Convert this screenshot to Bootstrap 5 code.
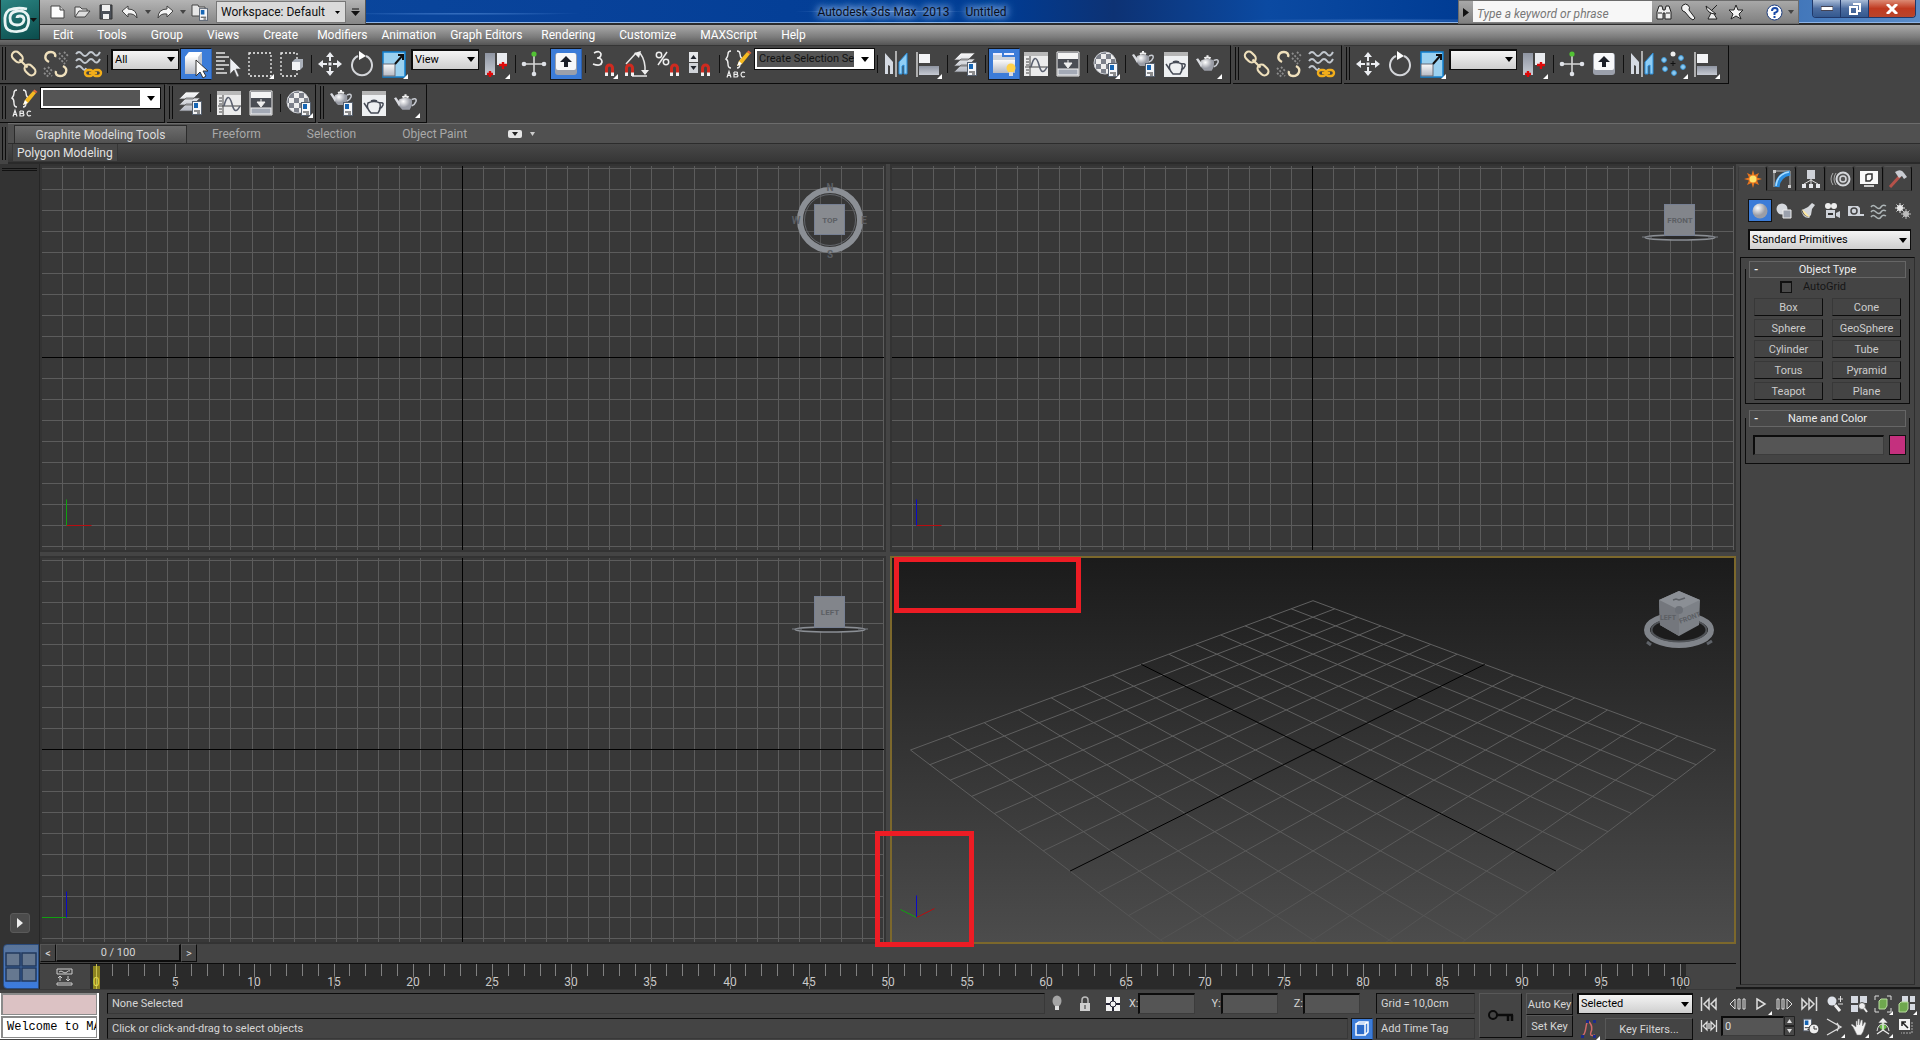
<!DOCTYPE html>
<html lang="en">
<head>
<meta charset="utf-8">
<meta name="viewport" content="width=device-width, initial-scale=1">
<title>Autodesk 3ds Max 2013 - Untitled</title>
<link href="https://cdn.jsdelivr.net/npm/bootstrap@5.3.0/dist/css/bootstrap.min.css" rel="stylesheet">
<style>
:root{--ui:#444;--line:#0c0c0c;--txt:#d6d6d6;--arrow:url("data:image/svg+xml,%3Csvg xmlns='http://www.w3.org/2000/svg' width='8' height='5'%3E%3Cpath d='M0 0h8L4 5z' fill='%23000'/%3E%3C/svg%3E")}
body{height:100vh;min-height:700px;background:var(--ui);color:var(--txt);font:12px/16px Roboto,"Noto Sans",sans-serif;overflow:hidden}
button,input,select{font:inherit;color:inherit;border-radius:0}
button{background:none;border:0;padding:0}
svg{display:block;flex:none}
/* title bar */
.titlebar{height:25px;background:radial-gradient(ellipse at 24% 60%,#3f78c8 0,#3f78c800 6%),radial-gradient(ellipse at 46% 50%,#5f8fd4 0,#5f8fd400 6%),radial-gradient(ellipse at 72% 90%,#2f68ba 0,#2f68ba00 8%),linear-gradient(90deg,#0c4a9e 0,#08429a 30%,#003c94 52%,#0d3274 58%,#0b4aa2 66%,#003c94 76%,#5a8cc8 100%);border-bottom:2px solid #2b2b2b;box-shadow:inset 0 -1px #8fb4e6;position:relative}
.appbtn{width:40px;height:40px;position:absolute;left:0;top:0;z-index:3;background:linear-gradient(160deg,#2b8482,#0b4c4c);border:1px solid #1c2b2b;border-top:0}
.quick{margin-left:40px;padding-left:6px;height:24px;background:linear-gradient(#b4b4b4,#868686);border-right:1px solid #555}
.quick button{width:24px;height:24px;display:grid;place-items:center}
.quick .slim{width:11px}
.wsbox{width:130px;height:22px;border:1px solid #777;color:#111;padding:0 4px;appearance:none;background:#dadada var(--arrow) no-repeat right 5px center/5px 3px}
.glow{color:#0a0f1c;text-shadow:0 0 8px #9fc0ee,0 0 12px #9fc0ee,0 0 6px #9fc0ee}
.infoc{height:24px;background:linear-gradient(#a8a8a8,#808080);border:1px solid #6c6c6c}
.infoc input{width:179px;height:21px;background:#f7f7f7;border:0;font-style:italic;padding:4px 4px 0;color:#111}
.infoc input::placeholder{color:#777;opacity:1}
.infoc button{width:24px;height:22px;display:grid;place-items:center}
.winc{height:18px;margin-right:4px;margin-left:13px;border:1px solid #20386a;border-top:0;border-radius:0 0 4px 4px;overflow:hidden}
.winc button{width:28px;background:linear-gradient(#a9bcd8,#4d6da0 50%,#33588f);border-right:1px solid #20386a;display:grid;place-items:center}
.winc .shut{width:46px;background:linear-gradient(#dc8a74,#c03a20 50%,#b8452c);border:0}
/* menus */
.menubar{height:20px;padding-left:48px;gap:14px;background:linear-gradient(#ababab,#7c7c7c 60%,#555)}
.menubar a{color:#fff;text-decoration:none;line-height:20px}
.menubar .pd{padding:0 5px}
/* toolbars */
.trow{gap:2px}
.tgroup{height:39px;padding:0 6px 2px 0;border-right:1px solid var(--line);border-bottom:1px solid var(--line);border-top:1px solid #353535}
.grip{width:8px;height:33px;position:relative}
.grip::after{content:"";position:absolute;left:2px;top:0;width:4px;height:100%;border:solid var(--line);border-width:0 1px}
.tb{width:32px;height:32px;position:relative;display:grid;place-items:center}
.tb.on{background:#3c7cd8;border:1px solid #16181c;border-right-color:#2b5fae}
.fly::after{content:"";position:absolute;right:2px;bottom:1px;border:solid transparent;border-width:0 0 5px 5px;border-bottom-color:#fff}
.vsep{width:6px;height:18px;position:relative}
.vsep::after{content:"";position:absolute;left:3px;top:0;width:1px;height:100%;background:#111}
.lst{appearance:none;height:21px;border:2px solid var(--line);border-width:2px 1px 1px 2px;background:var(--arrow) no-repeat right 3px center,linear-gradient(#f4f4f4,#cfcfcf);color:#000;padding:0 16px 0 2px;font-size:11px;line-height:16px}
.w70{width:68px;margin:0 1px 9px}
.cmb{appearance:none;width:119px;height:20px;margin:0 0 9px 1px;border:1px solid #fff;outline:1px solid var(--line);border-width:2px;background:var(--arrow) no-repeat right 3px center,linear-gradient(90deg,#555 97px,#fff 97px);color:#111;padding:0 18px 0 2px;font-size:11px;line-height:14px}
/* ribbon */
.rtabs{height:21px;background:#505050;border-top:1px solid #6c6c6c;border-bottom:1px solid #2c2c2c}
.rtabs button{color:#a9a9a9;height:19px;padding:0 21px}
.rtabs .cur{background:linear-gradient(#6c6c6c,#525252);color:#ddd;border:1px solid #2b2b2b;border-bottom:0;height:18px;width:173px;padding:0;margin-left:2px;align-self:end;line-height:16px;white-space:nowrap}
.rpanel{height:20px;background:linear-gradient(#484848,#363636);border-bottom:2px solid #2a2a2a}
.rpanel span{border:1px solid #363636;border-top:0;padding:0 4px;background:#474747;color:#e2e2e2;line-height:18px}
/* viewport area */
.strip{width:40px;background:#333;box-shadow:inset -1px 0 #262626}
.strip .bar{height:3px;border:solid #111;border-width:1px 0;margin:4px 3px 0 2px}
.playb{width:20px;height:20px;background:#4b4b4b;border:1px solid #5a5a5a;border-radius:3px;display:grid;place-items:center;margin:0 auto 11px}
.layb{width:36px;height:45px;background:linear-gradient(#5b7496,#3b7ce0);border:1px solid #2a4b7c;border-radius:4px 0 0 4px;margin-left:3px;display:grid;place-items:center}
.views{display:grid;grid-template:1fr 1fr/1fr 1fr;gap:4px;min-height:0}
.vp{position:relative;border:2px solid #333;background:#383838;min-width:0;min-height:0}
.vp>svg.cv{width:100%;height:100%;position:absolute;inset:0;overflow:hidden}
.vp.act{border-color:#7c682c;background:linear-gradient(#1b1b1b,#4c4c4c)}
.cube{position:absolute;right:14px;top:14px}
.cube text{font:bold 8px Roboto,sans-serif;fill:#5c5f64;text-anchor:middle}
.cube .dir{font-size:10px}
.cube .face{font-size:7px}
.note{position:absolute;border:5px solid #ed1c24;pointer-events:none;z-index:2}
.n1{left:2px;top:-1px;width:187px;height:56px}
.n2{left:-17px;bottom:-5px;width:99px;height:116px}
.slider{height:19px}
.slider button{height:18px;width:16px;border:1px solid var(--line);border-left-color:#555;border-top-color:#555;line-height:15px;font-size:11px}
.slider .thumb{width:125px;border-width:1px 2px 2px 1px}
.track{height:26px;border-top:1px solid var(--line)}
.track .mini{width:50px;display:grid;place-items:center}
.track .ruler{background:#2a2a2a;margin-right:50px;flex-shrink:1;min-width:0;overflow:visible}
.track text{font:12px Roboto,sans-serif;fill:#c9c9c9;text-anchor:middle}
.track .halo{paint-order:stroke;stroke:#2a2a2a;stroke-width:2px}
.track .now{fill:#e0d84a}
/* command panel */
.cpanel{width:184px;font-size:11px;border-bottom:2px solid #191919}
.ctabs{margin:2px 8px 0 2px}
.ctabs button{width:29px;height:25px;border:1px solid #555;border-bottom-color:#383838;border-right:1px solid var(--line);border-left-color:#3a3a3a;border-radius:3px 3px 0 0;display:grid;place-items:center}
.ctabs .cur{border-bottom-color:transparent}
.cats{margin:8px 5px 7px 12px}
.cats button{width:24px;height:23px;display:grid;place-items:center}
.cats .cur{background:#3c7cd8;border:1px solid #111}
.prim{margin:0 9px 7px 12px}
.rolls{margin:0 5px 2px 4px;border:1px solid var(--line);border-right-color:#2e2e2e;border-bottom-color:#2e2e2e;padding:11px 4px 0}
.roll{border:1px solid var(--line);border-top:0;margin-bottom:14px;padding:0 3px}
.rh{height:17px;border:1px solid #666;background:#484848;color:#eee;width:100%;position:relative;top:-8px;line-height:15px;display:block}
.rh i{position:absolute;left:4px;font-style:normal;font-weight:700}
.grid2{display:grid;grid-template-columns:69px 69px;gap:3px 9px;justify-content:center;padding-bottom:3px}
.grid2 button{height:18px;border:1px solid #383838;border-right-color:var(--line);border-bottom-color:var(--line);line-height:15px;color:#ccc}
.agrid{gap:11px;margin:-6px 0 4px 31px;color:#161616;height:14px}
.agrid input{appearance:none;width:12px;height:12px;border:1px solid #111;border-width:2px 1px 1px 2px;background:#4a4a4a;margin:0}
.sunk{background:#555;border:1px solid #3c3c3c;border-top:2px solid var(--line);border-left:2px solid var(--line);padding:0 2px;color:#ddd}
.namef{width:131px;height:20px}
.swatch{width:17px;height:20px;background:#c4307e;border:1px solid #111}
/* status */
.status{height:51px;padding-top:3px;font-size:11px;border-top:1px solid #383838}
.mxs{width:99px;height:46px;background:#fff}
.mxs div{height:22px;border:1px solid #8a8a8a;border-width:2px 1px 1px 2px;margin:0 2px 1px 1px;overflow:hidden;white-space:nowrap;color:#000;font:12px/18px "Liberation Mono",monospace;padding-left:4px}
.mxs .rec{background:#dcc2c4}
.cell{height:21px;border:1px solid #383838;border-top-color:var(--line);border-left-color:var(--line);padding:0 4px;line-height:19px;white-space:nowrap}
.w99{width:99px}
.raised{border:1px solid #585858;border-right-color:var(--line);border-bottom-color:var(--line);height:22px;white-space:nowrap;line-height:19px}
.rw{height:21px}
.rw+.rw{margin-top:4px}
.xyz{width:57px;height:21px}
.degr{width:22px;height:22px;margin:0 3px}
.keyb{width:43px;height:45px;display:grid;place-items:center}
.pb{width:24px;height:22px;display:grid;place-items:center;position:relative}
.pb.fly::after{right:1px;bottom:0;border-width:0 0 4px 4px}
.navg{display:grid;grid-template:22px 22px/repeat(4,23px);gap:1px;padding-right:2px}
.navg .pb{width:23px}
.frame{width:63px;height:20px}
</style>
<script src="https://cdn.jsdelivr.net/npm/bootstrap@5.3.0/dist/js/bootstrap.bundle.min.js"></script>
</head>
<body class="d-flex flex-column">
<svg width="0" height="0" class="position-absolute" aria-hidden="true">
<defs>
<linearGradient id="gm" x1="0" y1="0" x2="0" y2="1"><stop offset="0" stop-color="#fbfbfb"/><stop offset="1" stop-color="#b4b8c2"/></linearGradient>
<linearGradient id="gd" x1="0" y1="0" x2="0" y2="1"><stop offset="0" stop-color="#8f95a2"/><stop offset="1" stop-color="#c6cad2"/></linearGradient>
<radialGradient id="gs" cx=".35" cy=".3"><stop offset="0" stop-color="#fff"/><stop offset="1" stop-color="#9a9da6"/></radialGradient>
<pattern id="chk" width="10" height="10" patternUnits="userSpaceOnUse"><rect width="10" height="10" fill="#eee"/><path d="M0 0h5v5H0zM5 5h5v5H5z" fill="#7c808a"/></pattern>
<symbol id="i-link" viewBox="0 0 30 30"><g fill="none" stroke="#efe0bc" stroke-width="2.2"><rect x="2.500" y="4.500" width="12" height="8" rx="4" transform="rotate(45 9 8)"/><rect x="15" y="17" width="12" height="8" rx="4" transform="rotate(45 21 21)"/><path d="M10.500 10.500l8 8"/></g></symbol>
<symbol id="i-unlink" viewBox="0 0 30 30"><g fill="none" stroke="#efe0bc" stroke-width="2.400"><path d="M8 13C2 10 4 3 10 3c3 0 5 2 4 5"/><path d="M22 17c6 3 3 10-3 10-3 0-5-2-4-5"/></g><g fill="none" stroke="#8d8d8d" stroke-width="1.800" stroke-dasharray="2 1.500"><path d="M18 4l8 8M18 9l6 6M23 3l4 4M3 19l8 8M3 24l5 4M7 18l5 5"/></g></symbol>
<symbol id="i-bind" viewBox="0 0 30 30"><path d="M3 5q3-4 6 0t6 0 6 0 6-2M3 12q3-4 6 0t6 0 6 0 6-2M3 19q3-4 6 0t4 0" fill="none" stroke="#c2c8cf" stroke-width="2"/><g fill="none" stroke="#f3ae1a" stroke-width="2.400"><rect x="12" y="21" width="8" height="6" rx="3"/><rect x="20" y="21" width="8" height="6" rx="3"/><path d="M16 24h8"/></g></symbol>
<symbol id="i-sel" viewBox="0 0 30 30"><path d="M4 8l4-5h13v17l-4 5H4z" fill="#c3c6cc"/><path d="M4 8h13v17H4z" fill="url(#gm)"/><path d="M4 8l4-5h13l-4 5z" fill="#fff"/><path d="M15 11v16l4-4 3 6 3-2-3-5h5z" fill="#fff" stroke="#333"/></symbol>
<symbol id="i-byname" viewBox="0 0 30 30"><path d="M3 4h9M3 8h13M3 12h9M3 16h13M3 20h8M3 24h11" stroke="#e5e5e5" stroke-width="1.600"/><path d="M17 9v16l4-4 3 7 2-1-3-7h5z" fill="#eef0f4" stroke="#555" stroke-width=".6"/></symbol>
<symbol id="i-rect" viewBox="0 0 30 30"><path d="M4 4h22v23H4z" fill="none" stroke="#f2f2f2" stroke-width="1.300" stroke-dasharray="2 2"/></symbol>
<symbol id="i-win" viewBox="0 0 30 30"><path d="M4 4h16v23H4z" fill="none" stroke="#f2f2f2" stroke-width="1.300" stroke-dasharray="2 2"/><path d="M15 13l3-3h8v8l-3 3h-8z" fill="#aab0ba"/><path d="M15 13h8v8h-8z" fill="#f2f3f5"/></symbol>
<symbol id="i-move" viewBox="0 0 30 30"><path d="M15 3l4 5h-3v4h-2V8h-3zM15 27l4-5h-3v-4h-2v4h-3zM3 15l5-4v3h4v2H8v3zM27 15l-5-4v3h-4v2h4v3z" fill="#eceef2"/><rect x="13.500" y="13.500" width="3" height="3" fill="#eceef2"/></symbol>
<symbol id="i-rot" viewBox="0 0 30 30"><path d="M11 7a10 10 0 1 0 8 0" fill="none" stroke="#d4d6da" stroke-width="2"/><path d="M12 2l7 5-7 4z" fill="#fff"/></symbol>
<symbol id="i-scale" viewBox="0 0 30 30"><rect x="4" y="3" width="22" height="25" fill="#9bd1f0" stroke="#1180d0" stroke-width="1.500"/><rect x="4" y="15" width="12" height="12" fill="url(#gm)" stroke="#666a76"/><path d="M16 15l7-8M19 6h5v5" stroke="#111" stroke-width="2" fill="none"/></symbol>
<symbol id="i-pivot" viewBox="0 0 30 30"><rect x="4" y="4" width="10" height="22" fill="url(#gd)"/><path d="M16 4h10v12H16z" fill="#e9ebef"/><path d="M9 22v6M6 25h6M22 13v7M18 16h8" stroke="#e00909" stroke-width="2.400"/></symbol>
<symbol id="i-manip" viewBox="0 0 30 30"><path d="M15 5v20M5 15h20" stroke="#d6d6d6" stroke-width="1.600"/><circle cx="15" cy="5" r="2.600" fill="#52c234"/><circle cx="15" cy="25" r="2.300" fill="#dfe2e8"/><circle cx="5" cy="15" r="2.300" fill="#dfe2e8"/><circle cx="25" cy="15" r="2.300" fill="#dfe2e8"/></symbol>
<symbol id="i-kbd" viewBox="0 0 30 30"><rect x="4" y="4" width="22" height="22" rx="3" fill="#9ba0ab"/><rect x="5" y="4" width="20" height="17" rx="2" fill="#f7f8fa"/><path d="M15 7l6 6h-4v5h-4v-5H9z" fill="#1b1f28"/></symbol>
<symbol id="mag" viewBox="0 0 10 13"><path d="M2 12V5a3 3 0 0 1 6 0v7" fill="none" stroke="#cf2b20" stroke-width="3"/><path d="M.5 9.500h3V13h-3zM6.500 9.500h3V13h-3z" fill="#f2f2f2"/></symbol>
<symbol id="i-s3" viewBox="0 0 30 30"><path d="M5 4q6-3 7 1 0 4-4 4 5 0 5 4-1 5-9 2" fill="none" stroke="#eee" stroke-width="1.700"/><use href="#mag" x="15" y="14" width="11" height="13"/></symbol>
<symbol id="i-ang" viewBox="0 0 30 30"><path d="M5 15L15 4M19 4q6 8 5 20M11 27h15" fill="none" stroke="#e6e6e6" stroke-width="1.500"/><path d="M13 4l7-2-2 7zM20 21h8l-4 5z" fill="#eee"/><use href="#mag" x="3" y="14" width="11" height="13"/></symbol>
<symbol id="i-pct" viewBox="0 0 30 30"><g fill="none" stroke="#eee" stroke-width="1.500"><circle cx="6" cy="6" r="2.700"/><circle cx="13" cy="13" r="2.700"/><path d="M14 3L5 16"/></g><use href="#mag" x="16" y="14" width="11" height="13"/></symbol>
<symbol id="i-spin" viewBox="0 0 30 30"><rect x="4" y="3" width="9" height="10" fill="#e5e7ea"/><rect x="4" y="14" width="9" height="10" fill="#d0d3d8"/><path d="M5.500 10h6l-3-4zM5.500 17h6l-3 4z" fill="#20242c"/><use href="#mag" x="15" y="14" width="11" height="13"/></symbol>
<symbol id="i-abc" viewBox="0 0 30 30"><path d="M8 2Q5 2 5 5t-2 5q2 1 2 5t3 4M14 2q3 0 3 3t2 5q-2 1-2 5t-3 4" fill="none" stroke="#eee" stroke-width="1.400"/><path d="M14 17l2-5L24 3l3 2-8 10z" fill="#f5b921"/><path d="M24 3l1.500-1.500L28.500 4 27 5z" fill="#e86b3a"/><path d="M14 17l2-5 3 3z" fill="#fff"/><path d="M4 28.500l2-6 2 6M5 26.500h3M11 23v5h2q2 0 2-1.300t-2-1.300h-2M11 25.400h2q1.500 0 1.500-1.200T13 23h-2M22 23.500q-3.500-1.500-4 2 .5 3.500 4 2" stroke="#eee" stroke-width="1.200" fill="none"/></symbol>
<symbol id="i-mir" viewBox="0 0 30 30"><path d="M15 2v26" stroke="#ddd" stroke-width="1.400"/><path d="M4 4l8 9v12H9V17l-2-1v9H4z" fill="#d5dae2"/><path d="M26 4l-8 9v12h3V17l2-1v9h3z" fill="#8ecdf5" stroke="#2b8dd8"/></symbol>
<symbol id="i-align" viewBox="0 0 30 30"><path d="M4 3v25" stroke="#ddd" stroke-width="1.400"/><rect x="6" y="5" width="11" height="9" fill="#f3f4f6"/><rect x="6" y="17" width="20" height="9" fill="url(#gd)"/></symbol>
<symbol id="doc" viewBox="0 0 10 14"><rect x=".5" y=".5" width="9" height="13" fill="#f5f6f8" stroke="#56606e"/><rect x="2" y="2" width="4" height="5" fill="#1665b4"/><path d="M2 10h6M5 12h3" stroke="#222"/></symbol>
<symbol id="i-lay" viewBox="0 0 30 30"><path d="M10 4h14l-7 7H3zM10 10h14l-7 7H3zM10 16h14l-7 7H3z" fill="url(#gm)" stroke="#555" stroke-width=".7"/><use href="#doc" x="16" y="13" width="10" height="14"/></symbol>
<symbol id="i-rib" viewBox="0 0 30 30"><path d="M4 5h9v3h13v16H4z" fill="#cfd4dc"/><path d="M4 11h22v13H4z" fill="url(#gm)"/><path d="M4 5h9M15 5h10" stroke="#eef" stroke-width="2"/><circle cx="22" cy="19" r="4.500" fill="#ffd24a"/><rect x="20" y="23" width="4" height="4" fill="#d9dbe0"/></symbol>
<symbol id="i-curve" viewBox="0 0 30 30"><rect x="3" y="3" width="24" height="24" fill="#ececec"/><path d="M3 5h24" stroke="#b9b9b9" stroke-width="4"/><path d="M9 7v20M4 18h23M5 10h3M5 13h3M5 16h3M5 21h3M5 24h3" stroke="#444"/><path d="M10 18q4-16 8-2 3 12 8 2" fill="none" stroke="#5b6170" stroke-width="1.600"/></symbol>
<symbol id="i-schem" viewBox="0 0 30 30"><path d="M4 3h22v24H4z" fill="#4a4d54" stroke="#e9e9e9"/><rect x="5" y="4" width="20" height="6" fill="#f4f4f4"/><rect x="5" y="20" width="20" height="6" fill="#a3a9b5" stroke="#f4f4f4"/><path d="M15 11v5M11 14h8l-4 5z" stroke="#eee" fill="#eee"/></symbol>
<symbol id="i-mat" viewBox="0 0 30 30"><circle cx="14" cy="14" r="11" fill="url(#chk)" stroke="#c7cad0"/><use href="#doc" x="17" y="14" width="10" height="14"/></symbol>
<symbol id="pot" viewBox="0 0 22 16"><path d="M5 5q6-3 12 0 1 6-2 10H8Q3 11 5 5z" fill="url(#gs)"/><path d="M5 12Q2 7 0 4l2-1q2 3 4 5z" fill="#d9dbe0"/><path d="M17 5q5-2 4 2-1 3-4 4" fill="none" stroke="#c9ccd3" stroke-width="1.500"/><path d="M8 3q3-1.500 6 0M11 0v2" stroke="#eee" stroke-width="2"/></symbol>
<symbol id="i-rset" viewBox="0 0 30 30"><use href="#pot" x="3" y="2" width="22" height="16"/><use href="#doc" x="16" y="14" width="10" height="14"/></symbol>
<symbol id="i-rfrm" viewBox="0 0 30 30"><rect x="3" y="3" width="24" height="25" fill="#eef0f2"/><path d="M3 5h24" stroke="#b5b5b5" stroke-width="4"/><path d="M9 15q6-3 12 0 1 6-2 10h-7Q7 20 9 15zM9 21l-4-6M20 15q5-1 4 2t-4 4M12 13q3-1.500 6 0" fill="none" stroke="#454a55" stroke-width="1.500"/></symbol>
<symbol id="i-rend" viewBox="0 0 30 30"><use href="#pot" x="3" y="6" width="23" height="17"/></symbol>
<symbol id="i-arr" viewBox="0 0 30 30"><g fill="#8fcaf0" stroke="#3f9ad8"><circle cx="22" cy="9" r="2.400"/><circle cx="24" cy="18" r="2.400"/><circle cx="15" cy="24" r="2.400"/><circle cx="6" cy="20" r="2.400"/><circle cx="5" cy="11" r="2.400"/></g><circle cx="14" cy="5" r="2.500" fill="#eee"/><path d="M14 12v5M11.500 14.500h5" stroke="#111"/></symbol>
</defs>
</svg>

<header class="titlebar d-flex align-items-start justify-content-between">
<button class="appbtn" aria-label="Application menu"><svg width="38" height="39" viewBox="0 0 38 39"><path d="M26 9q-10-2-18 1-5 4-4 12 0 8 6 9 9 2 15-2 4-6 2-13-3-6-11-5-7 1-7 7 0 7 7 7 6 0 7-5 0-4-4-4-3 0-3 2" fill="none" stroke="#e9f4f4" stroke-width="2.800"/><path d="M29 18h7l-3.500 4z" fill="#111"/></svg></button>
<div class="quick d-flex align-items-center">
<button aria-label="New"><svg width="16" height="16"><path d="M1 2h9l4 4v8H1z" fill="#fdfdfd" stroke="#444"/><path d="M10 2v4h4" fill="#ccc" stroke="#444"/></svg></button>
<button aria-label="Open"><svg width="18" height="16"><path d="M2 13V3h5l2 2h5v3" fill="#eee" stroke="#444"/><path d="M2 13l4-6h11l-5 6z" fill="#ddd" stroke="#444"/></svg></button>
<button aria-label="Save"><svg width="16" height="16"><path d="M2 1h12v14H2z" fill="#4b5058" stroke="#333"/><path d="M4 1h8v6H4zM5 10h6v5H5z" fill="#f0f0f0"/></svg></button>
<button aria-label="Undo"><svg width="18" height="16"><path d="M1 7l6-5v3q9 0 9 9-3-5-9-4v3z" fill="#f5f5f5" stroke="#444"/></svg></button>
<button class="slim" aria-label="Undo list"><svg width="6" height="4"><path d="M0 0h6L3 4z" fill="#444"/></svg></button>
<button aria-label="Redo"><svg width="18" height="16"><path d="M17 7l-6-5v3Q2 5 2 14q3-5 9-4v3z" fill="#f5f5f5" stroke="#444"/></svg></button>
<button class="slim" aria-label="Redo list"><svg width="6" height="4"><path d="M0 0h6L3 4z" fill="#444"/></svg></button>
<button aria-label="Project folder"><svg width="18" height="20"><path d="M1 3h6l1 2h6v9H1z" fill="#e6e6e6" stroke="#444"/><use href="#doc" x="8" y="6" width="9" height="13"/></svg></button>
<select class="wsbox ms-1" aria-label="Workspace"><option>Workspace: Default</option></select>
<button class="slim mx-1" aria-label="Customize quick access"><svg width="9" height="8"><path d="M1 1h7" stroke="#111"/><path d="M0 3h9L4.500 8z" fill="#111"/></svg></button>
</div>
<div class="glow d-flex gap-3 pt-1"><span>Autodesk 3ds Max&nbsp; 2013</span><span>Untitled</span></div>
<div class="d-flex align-items-start">
<div class="infoc d-flex">
<button style="width:14px" aria-label="Collapse"><svg width="6" height="9"><path d="M0 0l6 4.500L0 9z" fill="#111"/></svg></button>
<input type="text" placeholder="Type a keyword or phrase" aria-label="Search help">
<button aria-label="Search"><svg width="16" height="16"><path d="M1 15V8l2-6h3l1 4h2l1-4h3l2 6v7H9V9H7v6z" fill="#eee" stroke="#222"/><path d="M2 9h4M10 9h4" stroke="#222"/></svg></button>
<button aria-label="Sign in"><svg width="16" height="18"><path d="M3 2a4 4 0 0 1 6 5l6 8-2 2-3-2-5-6a4 4 0 0 1-2-7z" fill="#f2f2f2" stroke="#222"/></svg></button>
<button aria-label="Exchange"><svg width="16" height="18"><path d="M2 3q1 8 10 8zM7 10l-3 6h9l-3-5M8 7l5-5" fill="#eee" stroke="#222"/></svg></button>
<button aria-label="Favorites"><svg width="16" height="16"><path d="M8 1l2 5h5l-4 4 2 5-5-3-5 3 2-5-4-4h5z" fill="#f4f4f4" stroke="#222"/></svg></button>
<button class="ms-3" style="width:20px" aria-label="Help"><svg width="17" height="17"><circle cx="8.500" cy="8.500" r="7.500" fill="#fff" stroke="#1c3d80"/><path d="M6 7q0-3 3-3t2.500 3Q11 8 8.500 9v2M8.500 12v2" fill="none" stroke="#1a4aa8" stroke-width="2"/></svg></button>
<button style="width:14px" aria-label="Help menu"><svg width="6" height="4"><path d="M0 0h6L3 4z" fill="#444"/></svg></button>
</div>
<div class="winc d-flex"><button aria-label="Minimize"><svg width="12" height="5"><rect width="12" height="4" y=".5" fill="#fff" stroke="#445"/></svg></button><button aria-label="Restore"><svg width="12" height="12"><path d="M4 1h7v7H9M1 4h7v7H1z" fill="none" stroke="#fff" stroke-width="2"/></svg></button><button class="shut" aria-label="Close"><svg width="12" height="10"><path d="M1 0l10 10M11 0L1 10" stroke="#fff" stroke-width="3"/></svg></button></div>
</div>
</header>

<nav class="menubar d-flex" aria-label="Main menu">
<a class="pd" href="#">Edit</a><a class="pd" href="#">Tools</a><a class="pd" href="#">Group</a><a class="pd" href="#">Views</a><a class="pd" href="#">Create</a><a href="#">Modifiers</a><a href="#">Animation</a><a href="#">Graph Editors</a><a class="pd" href="#">Rendering</a><a class="pd" href="#">Customize</a><a class="pd" href="#">MAXScript</a><a class="pd" href="#">Help</a>
</nav>

<div class="trow d-flex">
<div class="tgroup d-flex align-items-center" role="toolbar" aria-label="Main toolbar"><span class="grip"></span>
<button class="tb" aria-label="Link"><svg width="30" height="30"><use href="#i-link"/></svg></button>
<button class="tb" aria-label="Unlink"><svg width="30" height="30"><use href="#i-unlink"/></svg></button>
<button class="tb" aria-label="Bind"><svg width="30" height="30"><use href="#i-bind"/></svg></button><span class="vsep"></span>
<select class="lst w70" aria-label="Selection filter"><option>All</option></select>
<button class="tb on" aria-label="Select object"><svg width="30" height="30"><use href="#i-sel"/></svg></button>
<button class="tb" aria-label="Select by name"><svg width="30" height="30"><use href="#i-byname"/></svg></button>
<button class="tb fly" aria-label="Region"><svg width="30" height="30"><use href="#i-rect"/></svg></button>
<button class="tb" aria-label="Window crossing"><svg width="30" height="30"><use href="#i-win"/></svg></button><span class="vsep"></span>
<button class="tb" aria-label="Move"><svg width="30" height="30"><use href="#i-move"/></svg></button>
<button class="tb" aria-label="Rotate"><svg width="30" height="30"><use href="#i-rot"/></svg></button>
<button class="tb fly" aria-label="Scale"><svg width="30" height="30"><use href="#i-scale"/></svg></button>
<select class="lst w70" aria-label="Coordinate system"><option>View</option></select>
<button class="tb fly" aria-label="Pivot"><svg width="30" height="30"><use href="#i-pivot"/></svg></button><span class="vsep"></span>
<button class="tb" aria-label="Manipulate"><svg width="30" height="30"><use href="#i-manip"/></svg></button>
<button class="tb on" aria-label="Keyboard override"><svg width="30" height="30"><use href="#i-kbd"/></svg></button><span class="vsep"></span>
<button class="tb fly" aria-label="Snaps"><svg width="30" height="30"><use href="#i-s3"/></svg></button>
<button class="tb" aria-label="Angle snap"><svg width="30" height="30"><use href="#i-ang"/></svg></button>
<button class="tb" aria-label="Percent snap"><svg width="30" height="30"><use href="#i-pct"/></svg></button>
<button class="tb" aria-label="Spinner snap"><svg width="30" height="30"><use href="#i-spin"/></svg></button><span class="vsep"></span>
<button class="tb" aria-label="Edit named sets"><svg width="30" height="30"><use href="#i-abc"/></svg></button>
<select class="cmb" aria-label="Named selection sets"><option>Create Selection Se</option></select><span class="vsep"></span>
<button class="tb" aria-label="Mirror"><svg width="30" height="30"><use href="#i-mir"/></svg></button>
<button class="tb fly" aria-label="Align"><svg width="30" height="30"><use href="#i-align"/></svg></button><span class="vsep"></span>
<button class="tb" aria-label="Layers"><svg width="30" height="30"><use href="#i-lay"/></svg></button><span class="vsep"></span>
<button class="tb on" aria-label="Ribbon"><svg width="30" height="30"><use href="#i-rib"/></svg></button>
<button class="tb" aria-label="Curve editor"><svg width="30" height="30"><use href="#i-curve"/></svg></button>
<button class="tb" aria-label="Schematic view"><svg width="30" height="30"><use href="#i-schem"/></svg></button><span class="vsep"></span>
<button class="tb fly" aria-label="Material editor"><svg width="30" height="30"><use href="#i-mat"/></svg></button><span class="vsep"></span>
<button class="tb" aria-label="Render setup"><svg width="30" height="30"><use href="#i-rset"/></svg></button>
<button class="tb" aria-label="Rendered frame"><svg width="30" height="30"><use href="#i-rfrm"/></svg></button>
<button class="tb fly" aria-label="Render"><svg width="30" height="30"><use href="#i-rend"/></svg></button>
</div>
<div class="tgroup d-flex align-items-center pe-1" role="toolbar" aria-label="Link toolbar"><span class="grip"></span>
<button class="tb" aria-label="Link"><svg width="30" height="30"><use href="#i-link"/></svg></button>
<button class="tb" aria-label="Unlink"><svg width="30" height="30"><use href="#i-unlink"/></svg></button>
<button class="tb" aria-label="Bind"><svg width="30" height="30"><use href="#i-bind"/></svg></button>
</div>
<div class="tgroup d-flex align-items-center" role="toolbar" aria-label="Transform toolbar"><span class="grip"></span>
<button class="tb" aria-label="Move"><svg width="30" height="30"><use href="#i-move"/></svg></button>
<button class="tb" aria-label="Rotate"><svg width="30" height="30"><use href="#i-rot"/></svg></button>
<button class="tb fly" aria-label="Scale"><svg width="30" height="30"><use href="#i-scale"/></svg></button>
<select class="lst w70" aria-label="Coordinates"><option> </option></select>
<button class="tb fly" aria-label="Pivot"><svg width="30" height="30"><use href="#i-pivot"/></svg></button><span class="vsep"></span>
<button class="tb" aria-label="Manipulate"><svg width="30" height="30"><use href="#i-manip"/></svg></button>
<button class="tb" aria-label="Keyboard override"><svg width="30" height="30"><use href="#i-kbd"/></svg></button><span class="vsep"></span>
<button class="tb" aria-label="Mirror"><svg width="30" height="30"><use href="#i-mir"/></svg></button>
<button class="tb fly" aria-label="Array"><svg width="30" height="30"><use href="#i-arr"/></svg></button>
<button class="tb fly" aria-label="Align"><svg width="30" height="30"><use href="#i-align"/></svg></button>
</div>
</div>

<div class="trow d-flex">
<div class="tgroup d-flex align-items-center pe-1"><span class="grip"></span>
<button class="tb" aria-label="Edit named sets"><svg width="30" height="30"><use href="#i-abc"/></svg></button>
<select class="cmb" aria-label="Selection set"><option> </option></select>
</div>
<div class="tgroup d-flex align-items-center pe-0"><span class="grip"></span>
<button class="tb" aria-label="Layers"><svg width="30" height="30"><use href="#i-lay"/></svg></button><span class="vsep"></span>
<button class="tb" aria-label="Curve editor"><svg width="30" height="30"><use href="#i-curve"/></svg></button>
<button class="tb" aria-label="Schematic view"><svg width="30" height="30"><use href="#i-schem"/></svg></button><span class="vsep"></span>
<button class="tb fly" aria-label="Material editor"><svg width="30" height="30"><use href="#i-mat"/></svg></button>
</div>
<div class="tgroup d-flex align-items-center pe-1"><span class="grip"></span>
<button class="tb" aria-label="Render setup"><svg width="30" height="30"><use href="#i-rset"/></svg></button>
<button class="tb" aria-label="Rendered frame"><svg width="30" height="30"><use href="#i-rfrm"/></svg></button>
<button class="tb fly" aria-label="Render"><svg width="30" height="30"><use href="#i-rend"/></svg></button>
</div>
</div>

<div class="d-flex"><span class="grip h-auto my-1"></span><div class="flex-grow-1">
<div class="rtabs d-flex align-items-center ps-1"><button class="cur">Graphite Modeling Tools</button><button class="ms-1">Freeform</button><button class="ms-1">Selection</button><button class="ms-1">Object Paint</button><button class="d-flex align-items-center gap-2 ps-3 ms-1" aria-label="Ribbon display"><svg width="14" height="8"><rect width="14" height="8" rx="2" fill="#e6e6e6"/><path d="M4 2h6L7 6z" fill="#222"/></svg><svg width="5" height="4"><path d="M0 0h5L2.500 4z" fill="#ccc"/></svg></button></div>
<div class="rpanel d-flex ps-1"><span>Polygon Modeling</span></div>
</div></div>

<main class="d-flex flex-grow-1" style="min-height:0">
<aside class="strip d-flex flex-column"><div class="bar"></div>
<button class="playb mt-auto" aria-label="Expand"><svg width="6" height="10"><path d="M0 0l6 5-6 5z" fill="#eee"/></svg></button>
<button class="layb" aria-label="Viewport layout"><svg width="32" height="30"><g fill="#667890" stroke="#22395c" stroke-width="1.500"><rect x="1" y="1" width="14" height="13"/><rect x="17" y="1" width="14" height="13"/><rect x="1" y="16" width="14" height="13"/><rect x="17" y="16" width="14" height="13"/></g></svg></button>
</aside>
<section class="d-flex flex-column flex-grow-1" style="min-width:0">
<div class="views flex-grow-1">
<div class="vp" data-view="top"><svg class="cv"></svg>
<svg class="cube" width="80" height="80"><circle cx="40" cy="40" r="30" fill="#3332" stroke="#8b8f95" stroke-width="6"/><circle cx="40" cy="40" r="25.500" fill="none" stroke="#63666b"/><rect x="24.500" y="24.500" width="30" height="30" fill="#888b90" stroke="#767f92"/><text x="40" y="43">TOP</text><g class="dirs"><text class="dir" x="40" y="11">N</text><text class="dir" x="6" y="44">W</text><text class="dir" x="74" y="44">E</text><text class="dir" x="40" y="78">S</text></g></svg></div>
<div class="vp" data-view="front"><svg class="cv"></svg>
<svg class="cube" width="80" height="80"><ellipse cx="40" cy="57.500" rx="35" ry="2.500" fill="#2a2a2a" stroke="#8b8f95" stroke-width="1.500"/><path d="M2 57h10M68 57h10" stroke="#777a80"/><rect x="24.500" y="24.500" width="30" height="31" fill="#82858b" stroke="#767f92"/><text x="40" y="43">FRONT</text></svg></div>
<div class="vp" data-view="left"><svg class="cv"></svg>
<svg class="cube" width="80" height="80"><ellipse cx="40" cy="57.500" rx="35" ry="2.500" fill="#2a2a2a" stroke="#8b8f95" stroke-width="1.500"/><path d="M2 57h10M68 57h10" stroke="#777a80"/><rect x="24.500" y="24.500" width="30" height="31" fill="#82858b" stroke="#767f92"/><text x="40" y="43">LEFT</text></svg></div>
<div class="vp act" data-view="persp"><svg class="cv"></svg>
<svg class="cube" width="80" height="80"><ellipse cx="39" cy="58" rx="32" ry="15" fill="#1c1c1c" stroke="#80848a" stroke-width="6"/><ellipse cx="39" cy="58" rx="27.500" ry="11.500" fill="none" stroke="#505357" stroke-width="2"/><path d="M39 19l21 9-1 25-20 11-19-11-1-25z" fill="#7d8187"/><path d="M39 19l21 9-21 10-20-10z" fill="#8b8f95"/><path d="M19 28l20 10v26L20 53z" fill="#74777d"/><circle cx="39" cy="38" r="4" fill="#6c7077"/><path d="M33 28l3-1 3 1 3-1 3-1" stroke="#5c5f64" fill="none" stroke-width="1.500"/><text class="face" x="28" y="48">LEFT</text><text class="face" x="50" y="48" transform="rotate(-20 50 46)">FRONT</text><path d="M7 70l4 3M67 72l5-3" stroke="#5f6369" stroke-width="3"/></svg>
<div class="note n1"></div><div class="note n2"></div></div>
</div>
<div class="slider d-flex"><button aria-label="Previous frame">&lt;</button><button class="thumb">0 / 100</button><button aria-label="Next frame">&gt;</button></div>
<div class="track d-flex"><div class="mini"><svg width="18" height="18"><path d="M1 1h15v5H1zM1 15h15v2H1zM4 8v5M2 10l2-2 2 2M12 8v5M10 11l2 2 2-2M3 4q2-2 4 0t4 0 3-1" fill="none" stroke="#ccc"/></svg></div><svg class="ruler flex-grow-1" height="25" id="ruler"></svg></div>
</section>
<aside class="cpanel d-flex flex-column">
<div class="ctabs d-flex">
<button class="cur" aria-label="Create"><svg width="18" height="18"><path d="M9 0l1.500 5L15 3l-2 4.500 5 1.500-5 1.500 2 4.500-4.500-2L9 18l-1.500-5L3 15l2-4.500L0 9l5-1.500L3 3l4.500 2z" fill="#e8751e"/><circle cx="9" cy="9" r="3.500" fill="#ffe36b"/></svg></button>
<button aria-label="Modify"><svg width="20" height="20"><path d="M2 18V2h16v16" fill="none" stroke="#bbb"/><path d="M1 1h3v3H1zM16 16h3v3h-3z" fill="#ccc"/><path d="M5 18Q6 6 18 4" fill="none" stroke="#2b8ee0" stroke-width="5"/><path d="M4 17Q5 5 17 3" fill="none" stroke="#a9dcff" stroke-width="1.500"/></svg></button>
<button aria-label="Hierarchy"><svg width="20" height="20"><rect x="6" y="1" width="8" height="9" fill="#cfd2d8"/><path d="M10 10v5M10 11L3 15M10 11l7 4" stroke="#ddd"/><path d="M1 15h4v4H1zM8 15h4v4H8zM15 15h4v4h-4z" fill="#e6e8ec"/></svg></button>
<button aria-label="Motion"><svg width="22" height="18"><path d="M4 3q-4 6 0 12M7 3Q3 9 7 15" fill="none" stroke="#aaa"/><circle cx="14" cy="9" r="6.500" fill="#555" stroke="#d6d8dc" stroke-width="2"/><circle cx="14" cy="9" r="3" fill="none" stroke="#d6d8dc" stroke-width="1.500"/></svg></button>
<button aria-label="Display"><svg width="20" height="18"><rect x="1" y="1" width="18" height="13" fill="#fafafa"/><path d="M7 5l2-1h4v5l-2 2H7z" fill="none" stroke="#333" stroke-width="1.500"/><path d="M5 16h10" stroke="#ccc" stroke-width="2"/></svg></button>
<button aria-label="Utilities"><svg width="20" height="20"><path d="M2 18L12 7" stroke="#b5524a" stroke-width="3"/><path d="M7 3q6-4 9 1l3 4-3 2-2-3-3 2-2-3z" fill="#c9ccd2"/></svg></button>
</div>
<div class="cats d-flex">
<button class="cur" aria-label="Geometry"><svg width="18" height="18"><circle cx="9" cy="9" r="7.500" fill="url(#gs)"/></svg></button>
<button aria-label="Shapes"><svg width="18" height="18"><circle cx="7" cy="7" r="5.500" fill="#d6d9de"/><path d="M8 8h8v8H8z" fill="#9ba1ad" stroke="#eee"/></svg></button>
<button aria-label="Lights"><svg width="18" height="18"><path d="M3 8l6-3 4-4 3 2-3 4-1 6-2 2z" fill="#d5d8dc"/><path d="M2 7q2 8 9 8l-1 1Q3 16 2 7z" fill="#c9ccd2"/><path d="M3 7l8 8q-6 0-8-8z" fill="#ffe9a0"/></svg></button>
<button aria-label="Cameras"><svg width="18" height="18"><circle cx="5" cy="4" r="3" fill="#eee"/><circle cx="11" cy="4" r="3" fill="#eee"/><path d="M3 8h9v8H3zM13 11l4-2v7l-4-2z" fill="#cfd3da"/><path d="M5 12h5" stroke="#333" stroke-width="2"/></svg></button>
<button aria-label="Helpers"><svg width="18" height="18"><path d="M2 4h10l2 2v6h4v2H2z" fill="#cfd3da"/><circle cx="8" cy="9" r="3" fill="none" stroke="#444" stroke-width="1.500"/></svg></button>
<button aria-label="Space warps"><svg width="18" height="18"><path d="M1 5q2-3 5 0t5 0 5-1M1 10q2-3 5 0t5 0 5-1M1 15q2-3 5 0t5 0 5-1" fill="none" stroke="#aeb6b8" stroke-width="1.500"/></svg></button>
<button aria-label="Systems"><svg width="18" height="18"><circle cx="6" cy="6" r="3" fill="#e6e6e6"/><path d="M6 1v10M1 6h10M2.500 2.500l7 7M9.500 2.500l-7 7" stroke="#e6e6e6"/><circle cx="12" cy="12" r="3" fill="#bcbcbc"/><path d="M12 7v10M7 12h10M8.500 8.500l7 7M15.500 8.500l-7 7" stroke="#bcbcbc"/></svg></button>
</div>
<select class="lst prim" aria-label="Category"><option>Standard Primitives</option></select>
<div class="rolls flex-grow-1">
<div class="roll"><button class="rh"><i>-</i>Object Type</button>
<div class="agrid d-flex align-items-center"><input type="checkbox" id="ag"><label for="ag">AutoGrid</label></div>
<div class="grid2"><button>Box</button><button>Cone</button><button>Sphere</button><button>GeoSphere</button><button>Cylinder</button><button>Tube</button><button>Torus</button><button>Pyramid</button><button>Teapot</button><button>Plane</button></div></div>
<div class="roll"><button class="rh"><i>-</i>Name and Color</button>
<div class="d-flex justify-content-between ps-1 pb-2 align-items-center"><input class="sunk namef" aria-label="Object name"><button class="swatch" aria-label="Object color"></button></div></div>
</div>
</aside>
</main>

<footer class="status d-flex">
<div class="mxs"><div class="rec"></div><div>Welcome to MA</div></div>
<div class="flex-grow-1 ms-2" style="min-width:0">
<div class="d-flex rw align-items-center"><div class="cell flex-grow-1">None Selected</div>
<button class="pb" aria-label="Isolate"><svg width="12" height="18"><ellipse cx="6" cy="6" rx="4.500" ry="5.500" fill="#a5a5a5"/><path d="M4 11h4v4H4z" fill="#ddd"/></svg></button>
<button class="pb mx-1" aria-label="Lock selection"><svg width="12" height="16"><path d="M3 8V4a3 3 0 0 1 6 0v4" fill="none" stroke="#bbb" stroke-width="1.500"/><rect x="1" y="7" width="10" height="8" fill="#cfcfcf"/><path d="M6 9v4" stroke="#333"/></svg></button>
<button class="pb me-1" aria-label="Absolute mode"><svg width="14" height="14"><rect width="14" height="14" fill="#f2f2f2"/><circle cx="7" cy="7" r="3" fill="none" stroke="#223"/><path d="M7 0v4M7 10v4M0 7h4M10 7h4" stroke="#223" stroke-width="2"/></svg></button>
<label for="cx">X:</label><input id="cx" class="sunk xyz"><label for="cy" class="ms-3">Y:</label><input id="cy" class="sunk xyz"><label for="cz" class="ms-3">Z:</label><input id="cz" class="sunk xyz"><div class="cell w99 ms-3">Grid = 10,0cm</div></div>
<div class="d-flex rw align-items-center"><div class="cell flex-grow-1">Click or click-and-drag to select objects</div><button class="tb on degr" aria-label="Adaptive degradation"><svg width="14" height="15"><rect x="1" y="3" width="9" height="11" fill="#2b6ac8" stroke="#fff" stroke-width="1.500"/><path d="M1 3l3-2h9v10l-3 3M10 3l3-2" stroke="#fff" fill="none" stroke-width="1.500"/></svg></button><div class="cell w99">Add Time Tag</div></div>
</div>
<button class="raised keyb ms-1" aria-label="Set keys"><svg width="26" height="13"><circle cx="5" cy="6" r="4" fill="none" stroke="#0b0b0b" stroke-width="2"/><path d="M9 6h16M20 6v6M24 6v6" stroke="#0b0b0b" stroke-width="2.500"/></svg></button>
<div class="d-flex flex-column ms-1" style="width:47px"><button class="raised">Auto Key</button><button class="raised">Set Key</button></div>
<div class="ms-1" style="width:116px"><select class="lst w-100" aria-label="Key set"><option>Selected</option></select>
<div class="d-flex mt-1"><button class="pb fly" aria-label="Tangents"><svg width="16" height="20"><path d="M1 17q3-1 4-9t4-4 1 9 4 3" fill="none" stroke="#d06a6a" stroke-width="1.500"/><path d="M0 16h3v3H0zM12 1h3v3h-3zM5 1h3v3H5zM12 16h3v3h-3z" fill="#1d2c8a"/></svg></button><button class="raised flex-grow-1 ms-1 ">Key Filters...</button></div></div>
<div class="ms-1">
<div class="d-flex"><button class="pb" aria-label="Go to start"><svg width="18" height="14"><path d="M1.500 0v14M9 2L4 7l5 5zM16 2l-5 5 5 5z" fill="none" stroke="#ddd" stroke-width="1.500"/></svg></button>
<button class="pb ms-1" aria-label="Previous"><svg width="18" height="14"><path d="M7 2L2 7l5 5zM10 2h2v10h-2zM15 2h2v10h-2z" fill="none" stroke="#ddd"/></svg></button>
<button class="pb fly" aria-label="Play"><svg width="12" height="14"><path d="M2 2l8 5-8 5z" fill="none" stroke="#ddd" stroke-width="1.500"/></svg></button>
<button class="pb" aria-label="Next"><svg width="18" height="14"><path d="M11 2l5 5-5 5zM6 2h2v10H6zM1 2h2v10H1z" fill="none" stroke="#ddd"/></svg></button>
<button class="pb" aria-label="Go to end"><svg width="18" height="14"><path d="M16.500 0v14M9 2l5 5-5 5zM2 2l5 5-5 5z" fill="none" stroke="#ddd" stroke-width="1.500"/></svg></button></div>
<div class="d-flex align-items-center"><button class="pb" aria-label="Key mode"><svg width="18" height="12"><path d="M1.500 0v12M7 2L3 6l4 4zM11 2l4 4-4 4zM16.500 0v12M9 3v6" fill="none" stroke="#ddd" stroke-width="1.300"/></svg></button>
<input class="sunk frame" value="0" aria-label="Current frame"><svg width="11" height="20"><path d="M.5.500h10v9H.5zM.5 10.500h10v9H.5z" fill="#484848" stroke="#222"/><path d="M3 7h5L5.500 3zM3 13h5l-2.500 4z" fill="#ddd"/></svg>
<button class="pb ms-1" aria-label="Time configuration"><svg width="18" height="18"><use href="#doc" x="1" y="1" width="9" height="14"/><circle cx="12" cy="12" r="5" fill="#eee" stroke="#333"/><path d="M12 9v3h3" stroke="#333" fill="none"/></svg></button></div></div>
<div class="navg">
<button class="pb" aria-label="Zoom"><svg width="18" height="18"><circle cx="6" cy="6" r="4.500" fill="#dfe3ea"/><path d="M9 10l5 6" stroke="#eee" stroke-width="3"/><path d="M12 4h5M14.500 1v6M12 9h5" stroke="#ddd"/></svg></button>
<button class="pb" aria-label="Zoom all"><svg width="18" height="18"><path d="M1 1h7v7H1zM10 1h7v7h-7zM1 10h7v7H1z" fill="#d6dae2"/><circle cx="12" cy="11" r="3.500" fill="#eee" stroke="#555"/><path d="M14 13l3 4" stroke="#eee" stroke-width="2"/></svg></button>
<button class="pb fly" aria-label="Zoom extents"><svg width="18" height="18"><path d="M1 5V1h4M13 1h4v4M17 13v4h-4M5 17H1v-4" fill="none" stroke="#ddd"/><path d="M5 6l2-2h6v7l-2 3H5z" fill="#6fa84e" stroke="#b9dca0"/></svg></button>
<button class="pb fly" aria-label="Zoom extents all"><svg width="18" height="18"><path d="M4 1h6v6H4zM12 1h5v6h-5zM12 9h5v6h-5z" fill="#d6dae2"/><path d="M1 9l2-2h7v7l-2 3H1z" fill="#6fa84e" stroke="#b9dca0"/></svg></button>
<button class="pb fly" aria-label="Field of view"><svg width="18" height="18"><path d="M1 1l14 8L1 17M11 5q3 4 0 8" fill="none" stroke="#ddd" stroke-width="1.300"/></svg></button>
<button class="pb fly" aria-label="Pan"><svg width="18" height="18"><path d="M3 9L1 7l1-1 4 3V3h1.500v4L8 1h1.500v6L11 2h1.500v6l2-4L16 5l-3 9-2 3H7z" fill="#f2f2f2" stroke="#777" stroke-width=".5"/></svg></button>
<button class="pb fly" aria-label="Orbit"><svg width="18" height="18"><path d="M9 4l4 5-4 4-4-4z" fill="#6fc04e"/><path d="M9 1L6 4h6zM9 3v9M9 12l-6 4M9 12l6 4" fill="#eee" stroke="#eee" stroke-width="1.300"/><path d="M3 13q1-7 6-7t6 7" fill="none" stroke="#ddd"/></svg></button>
<button class="pb" aria-label="Maximize viewport"><svg width="18" height="18"><rect x="1" y="1" width="11" height="11" fill="#f2f2f2"/><path d="M4 4l6 6M4 8V4h4" stroke="#222" fill="none" stroke-width="1.500"/><path d="M14 4v11H3" stroke="#aaa" fill="none" stroke-dasharray="2 1"/></svg></button>
</div>
</footer>

<script>
const line=(x1,y1,x2,y2,c)=>`<line x1="${x1}" y1="${y1}" x2="${x2}" y2="${y2}" stroke="${c}"/>`;
const R='#b80d10',G='#10a010',B='#0a0ac8',K='#000';

// orthographic home grid, centred on the viewport
function ortho(w,h,view){
  const cx=Math.round(w/2)-.5, cy=Math.round(h/2)-.5, step=21.05;
  let s='';
  for(let i=-60;i<=60;i++){ if(!i) continue;
    const x=cx+Math.round(i*step), y=cy+i*21;
    if(x>0&&x<w) s+=line(x,0,x,h,'#5c5c5c');
    if(y>0&&y<h) s+=line(0,y,w,y,'#5c5c5c');
  }
  s+=line(cx,0,cx,h,K)+line(0,cy,w,cy,K);
  const oy=h-24.5, ox=24.5;
  if(view==='top') s+=line(ox,oy,ox+25,oy,R)+line(ox,oy,ox,oy-26,G);
  if(view==='front') s+=line(ox,oy,ox+25,oy,R)+line(ox,oy,ox,oy-26,B);
  if(view==='left') s+=line(ox,oy,0,oy,G)+line(ox,oy,ox,oy-26,B);
  return s;
}
// 14 x 14 ground plane under perspective projection
function persp(w,h){
  const cx=w/2, cy=h/2, k=.02456;
  const p=(u,v)=>{const d=u-v,t=u+v,q=1-k*t;return [(cx+28.75*d/q).toFixed(1),(cy+14.33*t/q).toFixed(1)]};
  let s='<defs><linearGradient id="fade" gradientUnits="userSpaceOnUse" x1="0" y1="0" x2="0" y2="'+h+'"><stop offset="0" stop-color="#606060"/><stop offset=".6" stop-color="#5e5e5e"/><stop offset="1" stop-color="#525252"/></linearGradient></defs>';
  for(let i=-7;i<=7;i++){ if(i) s+=line(...p(i,-7),...p(i,7),'url(#fade)')+line(...p(-7,i),...p(7,i),'url(#fade)'); }
  s+=line(...p(0,-7),...p(0,7),K)+line(...p(-7,0),...p(7,0),K);
  const x=24.5,y=h-24.5;
  return s+line(x,y,x,y-22,B)+line(x,y,x+18,y-9,R)+line(x,y,x-16,y-8,G);
}
function draw(){
  document.querySelectorAll('.vp').forEach(v=>{
    const w=v.clientWidth,h=v.clientHeight,t=v.dataset.view;
    v.querySelector('.cv').innerHTML = t==='persp'?persp(w,h):ortho(w,h,t);
  });
  // time ruler, frames 0 to 100
  const r=document.getElementById('ruler'), w=r.clientWidth, st=(w-12)/100;
  let s='<rect x="3" y="2" width="7" height="23" fill="#8c8420"/>';
  for(let i=0;i<=100;i++){ const x=Math.round(6+i*st)+.5;
    s+=line(x,0,x,i%5?12:25,i?'#808080':'#c9c050');
    if(i%5===0) s+=`<text x="${x-.5}" y="22" class="${i?'halo':'now'}">${i}</text>`;
  }
  r.innerHTML=s;
}
draw(); addEventListener('resize',draw);
</script>
</body>
</html>
